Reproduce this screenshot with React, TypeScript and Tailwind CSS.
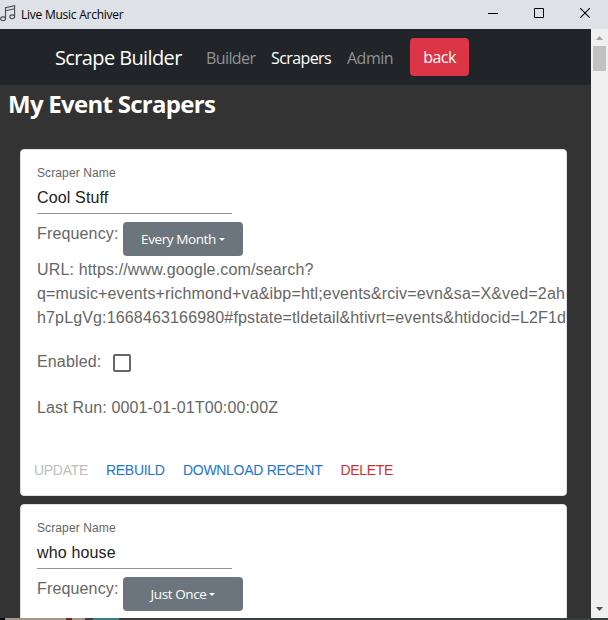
function TitleBar() {
  return (
    <header className="flex h-[29px] shrink-0 items-center bg-[#dee2e6] text-black">
      <svg className="mb-px h-5 w-4 shrink-0" viewBox="0 0 16 20" fill="none" stroke="#4a4d50" strokeWidth="1.1">
        <path d="M5.5 15V3.8L14.6 1.8V13M5.5 6.8L14.6 4.8" />
        <ellipse cx="3.1" cy="14.8" rx="2.4" ry="1.9" />
        <ellipse cx="12.2" cy="12.8" rx="2.4" ry="1.9" />
      </svg>
      <span className="ml-[5px] w-[420px] font-['Open_Sans',sans-serif] text-[12px] leading-4 tracking-[-0.25px] whitespace-nowrap">
        Live Music Archiver
      </span>
      <div className="mb-[3px] ml-[47px] flex items-center gap-[36px]">
        <svg className="h-[11px] w-[10px]" viewBox="0 0 10 11">
          <path d="M0 5.5H10" stroke="#000" />
        </svg>
        <svg className="h-[10px] w-[10px]" viewBox="0 0 10 10">
          <path d="M.5 .5H9.5V9.5H.5Z" fill="none" stroke="#000" />
        </svg>
        <svg className="h-[10px] w-[10px]" viewBox="0 0 10 10">
          <path d="M0 0L10 10M10 0L0 10" stroke="#000" strokeWidth="1.1" />
        </svg>
      </div>
    </header>
  );
}

function NavBar() {
  return (
    <nav className="flex h-14 shrink-0 items-center bg-[#212529] pt-px pl-[55px] font-['Open_Sans',sans-serif] whitespace-nowrap">
      <a className="w-[151px] text-[20px] tracking-[-0.62px] text-white">Scrape Builder</a>
      <a className="w-[65px] text-[16px] tracking-[-0.6px] text-[#909294]">Builder</a>
      <a className="w-[76px] text-[16px] tracking-[-0.6px] text-white">Scrapers</a>
      <a className="w-[63px] text-[16px] tracking-[-0.5px] text-[#909294]">Admin</a>
      <button className="mb-px h-[38px] w-[59px] rounded-[4px] bg-[#dc3545] text-[16px] tracking-[-0.5px] text-white">
        back
      </button>
    </nav>
  );
}

function NameField({ value }: { value: string }) {
  return (
    <div className="flex h-[49px] w-[195px] flex-col border-b border-[#949494]">
      <label className="pt-px text-[12px] leading-[14px] tracking-[0.11px] text-[#666]">Scraper Name</label>
      <div className="mt-[6px] text-[16px] leading-[23px] tracking-[0.15px] text-[#212121]">{value}</div>
    </div>
  );
}

function Frequency({ value }: { value: string }) {
  return (
    <div className="mt-2 flex h-[34px] items-start">
      <span className="w-[86px] leading-6 tracking-[0.15px]">Frequency:</span>
      <button className="flex h-[34px] w-[120px] items-center justify-center rounded-[4px] bg-[#6c757d] pt-px font-['Open_Sans',sans-serif] text-[13.5px] tracking-[-0.4px] text-white">
        {value}
        <span className="mb-px ml-[3px] border-x-[3px] border-t-[3px] border-x-transparent border-t-white" />
      </button>
    </div>
  );
}

function Actions() {
  return (
    <div className="mt-[48px] -ml-[3px] flex text-[14px] leading-[24px] tracking-[-0.3px] whitespace-nowrap">
      <span className="w-[72px] text-[#bdbdbd]">UPDATE</span>
      <span className="w-[77px] text-[#1976d2]">REBUILD</span>
      <span className="w-[157.5px] text-[#1976d2]">DOWNLOAD RECENT</span>
      <span className="text-[#d32f2f]">DELETE</span>
    </div>
  );
}

const card =
  "h-[347px] w-[547px] shrink-0 overflow-hidden rounded-[4px] border border-[#e0e0e0] bg-white pt-[15px] pl-4 text-[16px] text-[#666]";

export default function App() {
  return (
    <div className="flex h-[620px] w-[608px] flex-col overflow-hidden bg-[#333] font-['Liberation_Sans',Arial,sans-serif]">
      <TitleBar />
      <div className="flex h-[589px] shrink-0">
        <main className="flex w-[591px] flex-col overflow-hidden">
          <NavBar />
          <h1 className="mt-[2px] ml-2 h-[35px] shrink-0 font-['Open_Sans',sans-serif] text-[24px] leading-[34px] font-bold tracking-[-0.72px] whitespace-nowrap text-white">
            My Event Scrapers
          </h1>
          <section className="mt-[27px] ml-5 flex flex-col gap-2">
            <article className={card}>
              <NameField value="Cool Stuff" />
              <Frequency value="Every Month" />
              <p className="mt-[2px] leading-6 tracking-[0.15px] whitespace-nowrap">
                URL: https://www.google.com/search?
                <br />
                q=music+events+richmond+va&amp;ibp=htl;events&amp;rciv=evn&amp;sa=X&amp;ved=2ah
                <br />
                h7pLgVg:1668463166980#fpstate=tldetail&amp;htivrt=events&amp;htidocid=L2F1d
              </p>
              <div className="mt-5 flex h-6 items-center leading-6 tracking-[0.15px]">
                <span className="w-[76px]">Enabled:</span>
                <span className="mt-[2px] h-[18px] w-[18px] rounded-[2px] border-2 border-[#666]" />
              </div>
              <p className="mt-[22px] h-[14px] leading-6 tracking-[0.15px]">Last Run: 0001-01-01T00:00:00Z</p>
              <Actions />
            </article>
            <article className={card}>
              <NameField value="who house" />
              <Frequency value="Just Once" />
            </article>
          </section>
        </main>
        <aside className="flex w-[17px] flex-col items-center bg-[#f0f0f0]">
          <svg className="h-[17px] w-[17px]" viewBox="0 0 17 17">
            <path d="M5 11L8.5 7L12 11Z" fill="#a3a3a3" />
          </svg>
          <div className="h-[25px] w-[13px] bg-[#c1c1c1]" />
          <svg className="mt-auto h-[17px] w-[17px]" viewBox="0 0 17 17">
            <path d="M5 6L8.5 10L12 6Z" fill="#505050" />
          </svg>
        </aside>
      </div>
      <footer className="flex h-[2px] shrink-0 bg-[#3a4040]">
        <div className="w-[5px] bg-black" />
        <div className="w-[61px] bg-[#a59888]" />
        <div className="w-[6px] bg-[#70282a]" />
        <div className="w-[13px] bg-[#a59888]" />
        <div className="w-[8px]" />
        <div className="w-[26px] bg-[#397f87]" />
      </footer>
    </div>
  );
}
